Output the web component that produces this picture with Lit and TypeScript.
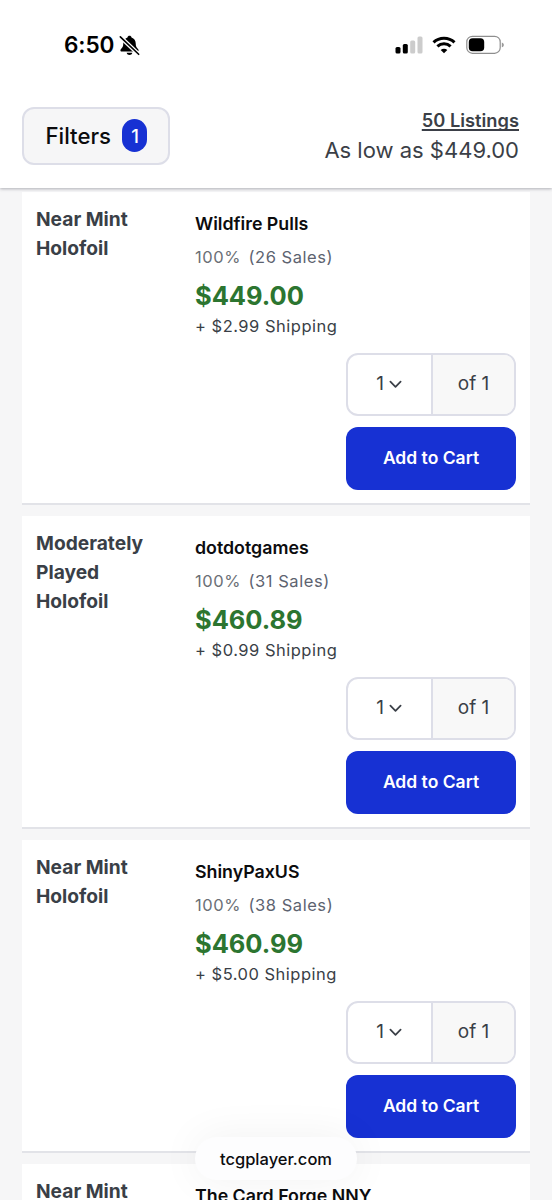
import { LitElement, html, css, nothing } from "lit";
import { customElement, property } from "lit/decorators.js";

interface Offer {
  sales: number;
  price: string;
  shipping: string;
}

interface Listing {
  condition: string[];
  seller: string;
  offer?: Offer;
}

const LISTINGS: Listing[] = [
  { condition: ["Near Mint", "Holofoil"], seller: "Wildfire Pulls", offer: { sales: 26, price: "$449.00", shipping: "$2.99" } },
  { condition: ["Moderately", "Played", "Holofoil"], seller: "dotdotgames", offer: { sales: 31, price: "$460.89", shipping: "$0.99" } },
  { condition: ["Near Mint", "Holofoil"], seller: "ShinyPaxUS", offer: { sales: 38, price: "$460.99", shipping: "$5.00" } },
  { condition: ["Near Mint"], seller: "The Card Forge NNY" },
];

@customElement("status-bar")
export class StatusBar extends LitElement {
  static styles = css`
    :host { display: flex; height: 88px; padding: 0 48px 0 64px; box-sizing: border-box; justify-content: space-between; }
    .side { display: flex; align-items: center; height: 88px; }
    .time { font-size: 22.6px; font-weight: 600; line-height: 30px; letter-spacing: -0.1px; color: #000; padding-top: 2px; }
    .bell { margin: 2px 0 0 5px; }
    svg { display: block; }
    .wifi { margin-left: 9px; }
    .battery { margin-left: 10px; }
    .signals { padding-top: 1px; }
  `;
  render() {
    return html`
      <div class="side">
        <span class="time">6:50</span>
        <svg class="bell" width="21" height="21" viewBox="0 0 22 22">
          <path d="M11 .9c-1.100 0-2 .7-2.100 1.600C6 3.400 4.500 5.700 4.500 8.700c0 3.600-1 4.500-2.600 6.100-.9.900-.4 2.500 1 2.500h16.200c1.400 0 1.900-1.600 1-2.500-1.600-1.600-2.600-2.500-2.600-6.100 0-3-1.500-5.300-4.400-6.200C13 1.600 12.100.9 11 .9zM8 18.700h6c-.4 1.500-1.500 2.300-3 2.300s-2.600-.8-3-2.300z" />
          <path d="M.8 1.400 21 20.600" stroke="#fff" stroke-width="4.400" />
          <path d="M1.400 2 20.600 20.200" stroke="#000" stroke-width="1.700" stroke-linecap="round" />
        </svg>
      </div>
      <div class="side signals">
        <svg width="28" height="18" viewBox="0 0 28 18">
          <rect x="0.500" y="11" width="5" height="6.500" rx="1.500" />
          <rect x="7.800" y="8" width="5" height="9.500" rx="1.500" />
          <rect x="15.200" y="4.500" width="5" height="13" rx="1.500" fill="#ccc" />
          <rect x="22.500" y="0.500" width="5" height="17" rx="1.500" fill="#ccc" />
        </svg>
        <svg class="wifi" width="24" height="18" viewBox="0 0 24 18" fill="none" stroke="#000" stroke-width="3">
          <path d="M1.500 6.400C7.300.8 16.700.8 22.500 6.400" />
          <path d="M5.400 10.400c3.700-3.500 9.500-3.500 13.200 0" />
          <path d="M12 17.300 8.700 14.100c1.900-1.700 4.700-1.700 6.600 0z" fill="#000" stroke="none" />
        </svg>
        <svg class="battery" width="38" height="20" viewBox="0 0 38 20">
          <rect x="0.800" y="1.300" width="33.400" height="17" rx="5.600" fill="none" stroke="#8e8e8e" stroke-width="1.200" />
          <rect x="2.800" y="3.300" width="15.400" height="13" rx="3.800" />
          <path d="M35.800 7.500c1.300.4 2 1.300 2 2.400s-.7 2-2 2.400z" fill="#999" />
        </svg>
      </div>
    `;
  }
}

@customElement("listings-header")
export class ListingsHeader extends LitElement {
  static styles = css`
    :host { display: flex; justify-content: space-between; align-items: flex-start; height: 100px; padding: 19px 33px 0 22px; box-sizing: border-box; }
    .filters { display: flex; align-items: center; gap: 11.500px; box-sizing: border-box; width: 148px; height: 58px; padding: 0 0 1px 21.500px; border: 2px solid #dddee8; border-radius: 12px; background: #f6f6f7; font: inherit; font-size: 22.200px; font-weight: 550; color: #0b0b0d; }
    .count { display: flex; align-items: center; justify-content: center; width: 25px; height: 33px; border-radius: 13px; background: #1731d3; color: #fff; font-size: 18.500px; font-weight: 500; }
    .summary { display: flex; flex-direction: column; align-items: flex-end; color: #3b3f47; }
    .total { font-size: 18.300px; font-weight: 600; line-height: 26px; text-decoration: underline; text-decoration-thickness: 1.500px; text-underline-offset: 2px; text-decoration-skip-ink: none; }
    .low { font-size: 22px; line-height: 35px; }
  `;
  render() {
    return html`
      <button class="filters"><span>Filters</span><span class="count">1</span></button>
      <div class="summary">
        <span class="total">50 Listings</span>
        <span class="low">As low as $449.00</span>
      </div>
    `;
  }
}

@customElement("listing-card")
export class ListingCard extends LitElement {
  @property({ attribute: false }) listing!: Listing;

  static styles = css`
    :host { display: grid; grid-template-columns: 159px 1fr; flex: none; box-sizing: border-box; height: 313px; padding: 13px 14px 0; background: #fff; border-bottom: 2px solid #e2e3e8; }
    .condition { font-size: 19.200px; font-weight: 700; line-height: 28.800px; color: #3a3f47; }
    .line { display: block; }
    .offer { display: flex; flex-direction: column; align-items: flex-start; }
    .seller { font-size: 17.800px; font-weight: 600; line-height: 32px; margin-top: 3px; color: #0c0c0e; white-space: nowrap; }
    .rating { display: flex; gap: 7.500px; margin-top: 1px; font-size: 16.500px; line-height: 32px; letter-spacing: 0.550px; color: #6b6f76; }
    .sales { color: #5d6370; }
    .price { margin-top: 5px; font-size: 25.500px; font-weight: 700; line-height: 36px; letter-spacing: -0.050px; color: #2c7530; }
    .shipping { font-size: 16.500px; line-height: 24px; letter-spacing: 0.500px; color: #3a3f47; }
    .actions { display: flex; flex-direction: column; gap: 11px; width: 170px; margin-top: 14.500px; align-self: flex-end; }
    .quantity { display: grid; grid-template-columns: 85px 1fr; box-sizing: border-box; height: 63px; border: 2px solid #dddee8; border-radius: 12px; overflow: hidden; color: #3a3f47; font-size: 19px; }
    .picker, .stock { display: flex; align-items: center; justify-content: center; padding-bottom: 1px; }
    .picker { gap: 5px; padding-right: 1px; border-right: 2px solid #dddee8; }
    .stock { background: #f8f8f8; }
    .cart { height: 63px; border: 0; border-radius: 12px; background: #1731d3; color: #fff; font: inherit; font-size: 17.500px; font-weight: 600; padding: 0 0 2px; }
    svg { display: block; margin-top: 1px; }
  `;
  render() {
    const { condition, seller, offer } = this.listing;
    return html`
      <div class="condition">${condition.map((c) => html`<span class="line">${c}</span>`)}</div>
      <div class="offer">
        <span class="seller">${seller}</span>
        ${offer
          ? html`
              <span class="rating"><span>100%</span><span class="sales">(${offer.sales} Sales)</span></span>
              <span class="price">${offer.price}</span>
              <span class="shipping">+ ${offer.shipping} Shipping</span>
              <div class="actions">
                <div class="quantity">
                  <span class="picker">
                    <span>1</span>
                    <svg width="13" height="9" viewBox="0 0 14 9" fill="none" stroke="#3a3f47" stroke-width="1.900" stroke-linecap="round" stroke-linejoin="round"><path d="M1.500 1.500 7 7l5.500-5.500" /></svg>
                  </span>
                  <span class="stock">of 1</span>
                </div>
                <button class="cart">Add to Cart</button>
              </div>
            `
          : nothing}
      </div>
    `;
  }
}

@customElement("app-root")
export class AppRoot extends LitElement {
  static styles = css`
    :host { display: block; position: relative; width: 100%; height: 1200px; overflow: hidden; background: #f6f6f7; font-family: Inter, "Liberation Sans", sans-serif; }
    .top { position: relative; height: 188px; background: #fff; box-shadow: 0 1px 3px rgba(40, 42, 60, 0.35); z-index: 1; }
    .list { display: flex; flex-direction: column; gap: 11px; padding: 4px 22px 0; }
    .address { position: absolute; left: 195px; top: 1137px; display: flex; align-items: center; justify-content: center; width: 162px; height: 43px; border-radius: 22px; background: #fdfdfe; box-shadow: 0 0 44px rgba(0, 0, 0, 0.06); font-size: 16.500px; font-weight: 500; color: #0c0c0e; z-index: 2; }
  `;
  render() {
    return html`
      <div class="top">
        <status-bar></status-bar>
        <listings-header></listings-header>
      </div>
      <div class="list">${LISTINGS.map((l) => html`<listing-card .listing=${l}></listing-card>`)}</div>
      <div class="address">tcgplayer.com</div>
    `;
  }
}
